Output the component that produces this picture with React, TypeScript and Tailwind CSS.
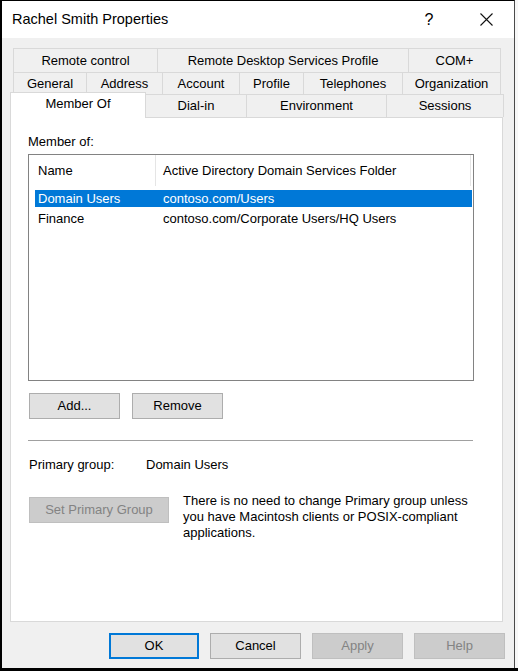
import React from "react";

const font = { fontFamily: '"Liberation Sans", Arial, sans-serif' };

function Tab({ label, w, selected }: { label: string; w: string; selected?: boolean }) {
  return (
    <div
      className={
        "flex items-center justify-center border border-b-0 border-[#d9d9d9] -ml-px first:ml-0 text-[13px] text-black " +
        w +
        (selected ? " bg-white relative z-10 h-[26px] -mt-[2px] -mb-px pb-[3px]" : " bg-[#f0f0f0] h-full")
      }
    >
      {label}
    </div>
  );
}

function Btn({ label, w, variant }: { label: string; w: string; variant?: "default" | "disabled" | "primary" }) {
  const v =
    variant === "disabled"
      ? "bg-[#cccccc] border border-[#bfbfbf] text-[#838383]"
      : variant === "primary"
      ? "bg-[#e1e1e1] border-2 border-[#0078d7] text-black"
      : "bg-[#e1e1e1] border border-[#adadad] text-black";
  return (
    <div className={"h-[26px] flex items-center justify-center text-[13px] " + w + " " + v}>{label}</div>
  );
}

export default function App() {
  return (
    <div className="w-[518px] h-[671px] bg-white flex flex-col" style={font}>
      <div className="flex h-[668px]">
        <div className="w-[515px] h-full bg-[#f0f0f0] border-l-2 border-t border-black border-r border-r-[#4a4a4a] flex flex-col">
          {/* title bar */}
          <div className="h-[37px] bg-white flex items-center shrink-0">
            <div className="pl-[10px] text-[14.5px] text-black">Rachel Smith Properties</div>
            <div className="ml-auto w-[24px] text-center text-[16px] text-black -ml-px">?</div>
            <div className="ml-[22px] w-[46px] flex items-center justify-center mr-[5px]">
              <svg width="13" height="13" viewBox="0 0 13 13">
                <path d="M0.5 0.5 L12.5 12.5 M12.5 0.5 L0.5 12.5" stroke="#111" strokeWidth="1.1" fill="none" />
              </svg>
            </div>
          </div>

          {/* body */}
          <div className="flex flex-col px-[8px] pt-[10px]">
            <div className="flex ml-[3px] h-[24px]">
              <Tab label="Remote control" w="w-[145px]" />
              <Tab label="Remote Desktop Services Profile" w="w-[252px]" />
              <Tab label="COM+" w="w-[93px]" />
            </div>
            <div className="flex ml-[3px] h-[22px]">
              <Tab label="General" w="w-[74px]" />
              <Tab label="Address" w="w-[77px]" />
              <Tab label="Account" w="w-[78px]" />
              <Tab label="Profile" w="w-[65px]" />
              <Tab label="Telephones" w="w-[100px]" />
              <Tab label="Organization" w="w-[99px]" />
            </div>
            <div className="flex h-[23px] items-start">
              <Tab label="Member Of" w="w-[136px]" selected />
              <Tab label="Dial-in" w="w-[102px]" />
              <Tab label="Environment" w="w-[141px]" />
              <Tab label="Sessions" w="w-[118px]" />
            </div>

            {/* panel */}
            <div className="w-[493px] h-[505px] bg-white border border-[#d9d9d9] pl-[17px] pt-[16px] flex flex-col text-[13px] text-black">
              <div className="leading-[15px]">Member of:</div>
              <div className="mt-[5px] w-[446px] h-[227px] border border-[#828282] bg-white flex flex-col">
                <div className="h-[31px] flex items-stretch">
                  <div className="w-[127px] border-r border-[#e5e5e5] flex items-center pl-[9px]">Name</div>
                  <div className="w-[315px] border-r border-[#e5e5e5] flex items-center pl-[7px]">
                    Active Directory Domain Services Folder
                  </div>
                </div>
                <div className="mt-[4px] ml-[6px] w-[437px] h-[17px] bg-[#0078d7] text-white flex items-center">
                  <div className="w-[128px] pl-[3px]">Domain Users</div>
                  <div>contoso.com/Users</div>
                </div>
                <div className="mt-[3px] ml-[6px] w-[437px] h-[18px] flex items-center">
                  <div className="w-[128px] pl-[3px]">Finance</div>
                  <div>contoso.com/Corporate Users/HQ Users</div>
                </div>
              </div>

              <div className="mt-[12px] flex gap-[12px] ml-[1px]">
                <Btn label="Add..." w="w-[91px]" />
                <Btn label="Remove" w="w-[91px]" />
              </div>

              <div className="mt-[21px] w-[445px] h-px bg-[#a0a0a0]" />

              <div className="mt-[16px] flex leading-[15px] ml-[1px]">
                <div className="w-[117px]">Primary group:</div>
                <div>Domain Users</div>
              </div>

              <div className="mt-[25px] flex items-start ml-[1px]">
                <Btn label="Set Primary Group" w="w-[140px]" variant="disabled" />
                <div className="ml-[14px] -mt-[4px] leading-[16px] w-[300px]">
                  There is no need to change Primary group unless
                  <br />
                  you have Macintosh clients or POSIX-compliant
                  <br />
                  applications.
                </div>
              </div>
            </div>

            {/* bottom buttons */}
            <div className="mt-[11px] flex justify-end gap-[11px] pr-[1px]">
              <Btn label="OK" w="w-[90px]" variant="primary" />
              <Btn label="Cancel" w="w-[91px]" />
              <Btn label="Apply" w="w-[91px]" variant="disabled" />
              <Btn label="Help" w="w-[91px]" variant="disabled" />
            </div>
          </div>
        </div>
        <div className="flex-1 bg-[#f7f7f7]" />
      </div>
      <div className="h-[3px] bg-black" />
    </div>
  );
}
